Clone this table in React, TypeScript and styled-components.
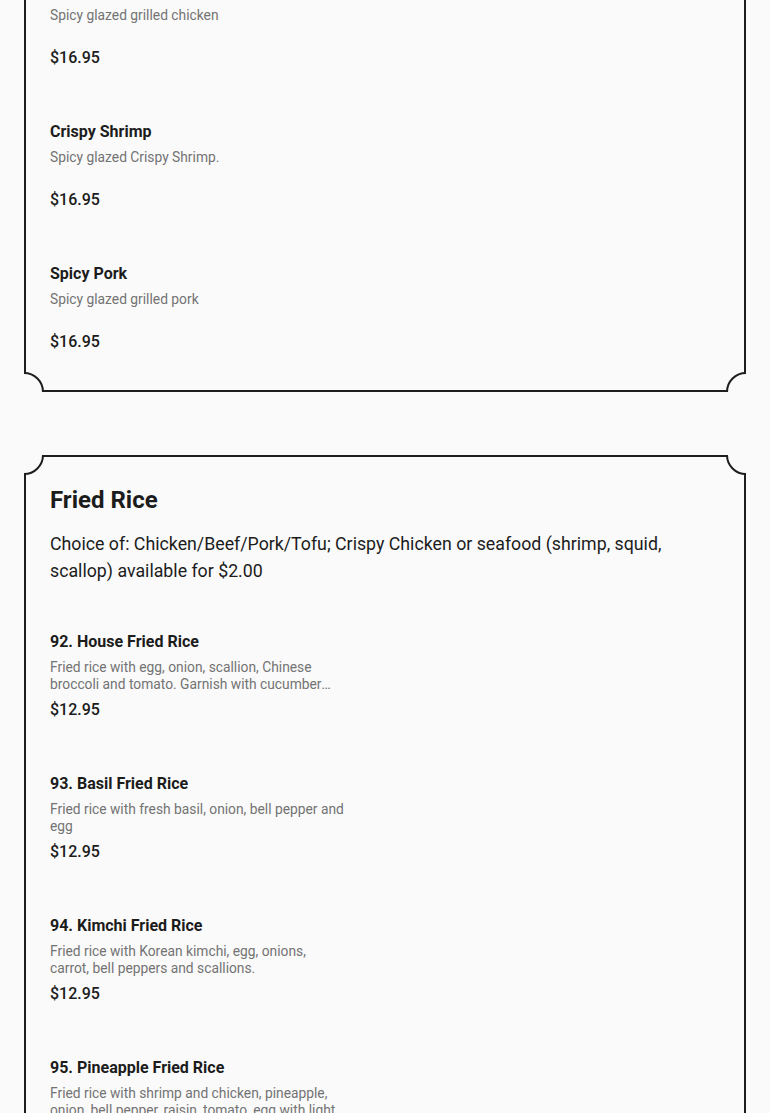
import React from 'react';
import styled, { createGlobalStyle } from 'styled-components';

const GlobalStyle = createGlobalStyle`
  html, body {
    margin: 0;
    padding: 0;
    background: #fafafa;
    font-family: Roboto, "Liberation Sans", Arial, sans-serif;
    color: #1c1c1c;
  }
`;

const Page = styled.main`
  display: flex;
  flex-direction: column;
  gap: 63px;
  padding: 0 24px 64px;
  margin-top: -49px;
`;

const Card = styled.section`
  position: relative;
  overflow: hidden;
  padding: 28px 26px 39px;
  &::before {
    content: '';
    position: absolute;
    inset: 0;
    border: 2px solid #1e1e1e;
    pointer-events: none;
  }
`;

const Notch = styled.span<{ $v: 'top' | 'bottom'; $h: 'left' | 'right' }>`
  position: absolute;
  ${(p) => p.$v}: -20px;
  ${(p) => p.$h}: -20px;
  width: 40px;
  height: 40px;
  box-sizing: border-box;
  border: 2px solid #1e1e1e;
  border-radius: 50%;
  background: #fafafa;
  z-index: 1;
`;

const Title = styled.h2`
  margin: 0;
  font-size: 24px;
  line-height: 34px;
  font-weight: 700;
  color: #1c1c1c;
`;

const Intro = styled.p`
  margin: 14px 0 0;
  font-size: 17.75px;
  line-height: 27px;
  color: #1c1c1c;
`;

const ItemList = styled.div<{ $afterHeader?: boolean }>`
  display: flex;
  flex-direction: column;
  gap: 52px;
  margin-top: ${(p) => (p.$afterHeader ? '46px' : '0')};
`;

const Item = styled.article`
  display: flex;
  flex-direction: column;
`;

const ItemName = styled.h3`
  margin: 0;
  font-size: 16px;
  line-height: 22px;
  font-weight: 700;
  color: #1c1c1c;
`;

const ItemDesc = styled.p`
  margin: 6px 0 0;
  width: 296px;
  height: 34px;
  font-size: 13.8px;
  line-height: 17px;
  color: #737373;
  display: -webkit-box;
  -webkit-line-clamp: 2;
  -webkit-box-orient: vertical;
  overflow: hidden;
`;

const Price = styled.div`
  margin-top: 6px;
  font-size: 16px;
  line-height: 22px;
  font-weight: 500;
  color: #1c1c1c;
`;

type MenuItem = { name: string; desc: string; price: string };

const spicy: MenuItem[] = [
  { name: 'Spicy Chicken', desc: 'Spicy glazed grilled chicken', price: '$16.95' },
  { name: 'Crispy Shrimp', desc: 'Spicy glazed Crispy Shrimp.', price: '$16.95' },
  { name: 'Spicy Pork', desc: 'Spicy glazed grilled pork', price: '$16.95' },
];

const friedRice: MenuItem[] = [
  {
    name: '92. House Fried Rice',
    desc: 'Fried rice with egg, onion, scallion, Chinese broccoli and tomato. Garnish with cucumber slices and lime.',
    price: '$12.95',
  },
  { name: '93. Basil Fried Rice', desc: 'Fried rice with fresh basil, onion, bell pepper and egg', price: '$12.95' },
  {
    name: '94. Kimchi Fried Rice',
    desc: 'Fried rice with Korean kimchi, egg, onions, carrot, bell peppers and scallions.',
    price: '$12.95',
  },
  {
    name: '95. Pineapple Fried Rice',
    desc: 'Fried rice with shrimp and chicken, pineapple, onion, bell pepper, raisin, tomato, egg with light curry powder.',
    price: '$14.95',
  },
];

const Notches: React.FC<{ top?: boolean }> = ({ top = true }) => (
  <>
    {top && <Notch $v="top" $h="left" />}
    {top && <Notch $v="top" $h="right" />}
    <Notch $v="bottom" $h="left" />
    <Notch $v="bottom" $h="right" />
  </>
);

const Items: React.FC<{ items: MenuItem[]; afterHeader?: boolean }> = ({ items, afterHeader }) => (
  <ItemList $afterHeader={afterHeader}>
    {items.map((item) => (
      <Item key={item.name}>
        <ItemName>{item.name}</ItemName>
        <ItemDesc>{item.desc}</ItemDesc>
        <Price>{item.price}</Price>
      </Item>
    ))}
  </ItemList>
);

const App: React.FC = () => {
  return (
    <>
      <GlobalStyle />
      <Page>
        <Card>
          <Notches />
          <Items items={spicy} />
        </Card>

        <Card>
          <Notches />
          <Title>Fried Rice</Title>
          <Intro>
            Choice of: Chicken/Beef/Pork/Tofu; Crispy Chicken or seafood (shrimp, squid, scallop) available for
            $2.00
          </Intro>
          <Items items={friedRice} afterHeader />
        </Card>
      </Page>
    </>
  );
};

export default App;
